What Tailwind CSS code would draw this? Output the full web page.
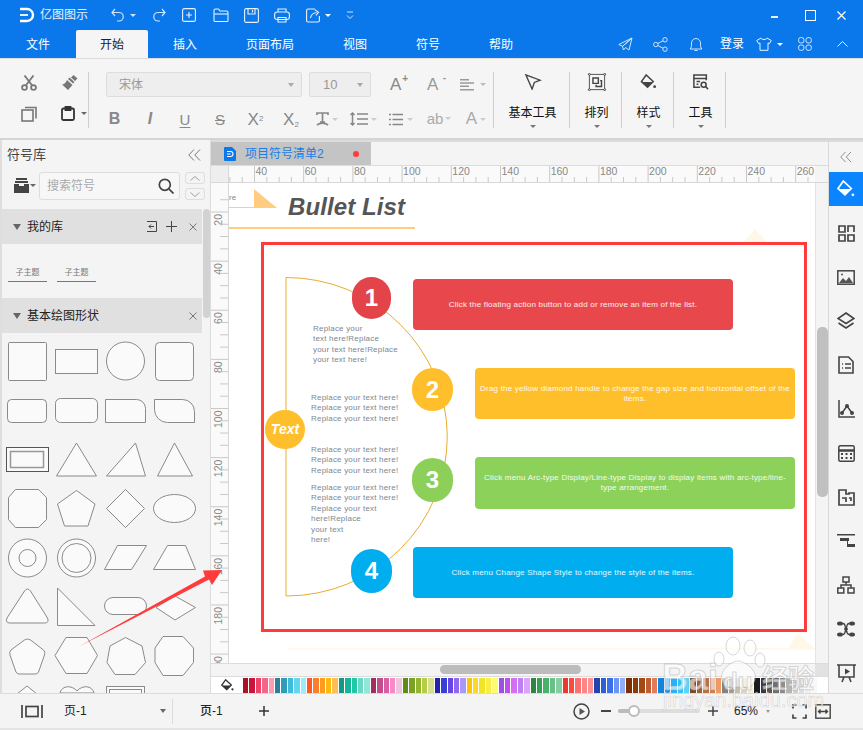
<!DOCTYPE html>
<html lang="zh">
  <head>
    <meta charset="UTF-8" />
    <meta name="viewport" content="width=device-width, initial-scale=1.0" />
    <script src="https://cdn.jsdelivr.net/npm/@tailwindcss/browser@4"></script>
    <title>亿图图示</title>
  </head>
  <body class="bg-[#f4f4f4] overflow-hidden">
    <div class="relative w-[863px] h-[730px] overflow-hidden flex flex-col text-xs text-[#333] font-['Liberation_Sans','Noto_Sans_CJK_SC',sans-serif]">

      <!-- title bar -->
      <div class="h-[30px] bg-[#0a78eb] flex items-center text-white shrink-0">
        <svg class="ml-[19px] w-[16px] h-[16px]" viewBox="0 0 16 16" fill="none" stroke="#fff" stroke-width="2.4"><path d="M1 2h7a6 6 0 0 1 0 12H1"/><path d="M1 8h8" stroke-width="1.8"/></svg>
        <span class="ml-[5px] text-[12px] w-[48px] whitespace-nowrap text-white/90">亿图图示</span>
        <svg class="ml-[23px] w-[13px] h-[14px]" viewBox="0 0 13 14" fill="none" stroke="#cfe4fb" stroke-width="1.2"><path d="M4 1 1 4.500 4 8"/><path d="M1 4.500h7a4 4 0 0 1 0 8.500H6"/></svg>
        <span class="ml-[6px] w-0 h-0 border-x-[3px] border-x-transparent border-t-[3px] border-t-[#cfe4fb]"></span>
        <svg class="ml-[17px] w-[13px] h-[14px]" viewBox="0 0 13 14" fill="none" stroke="#cfe4fb" stroke-width="1.2"><path d="M9 1l3 3.500L9 8"/><path d="M12 4.500H5a4 4 0 0 0 0 8.500h2"/></svg>
        <svg class="ml-[16px] w-[14px] h-[14px]" viewBox="0 0 14 14" fill="none" stroke="#e8f2fd" stroke-width="1.1"><rect x=".6" y=".6" width="12.800" height="12.800" rx="1.500"/><path d="M7 4v6M4 7h6"/></svg>
        <svg class="ml-[17px] w-[16px] h-[14px]" viewBox="0 0 16 14" fill="none" stroke="#e8f2fd" stroke-width="1.1"><path d="M1 12.500V2.500a1.500 1.500 0 0 1 1.500-1.500h3L7 3h6.500A1.500 1.500 0 0 1 15 4.500v8a1 1 0 0 1-1 1H2a1 1 0 0 1-1-1z"/><path d="M1 6h14"/></svg>
        <svg class="ml-[15px] w-[15px] h-[15px]" viewBox="0 0 15 15" fill="none" stroke="#e8f2fd" stroke-width="1.1"><rect x=".6" y=".6" width="13.800" height="13.800" rx="1.500"/><path d="M4 1v5h7V1M8.500 2v2.500"/></svg>
        <svg class="ml-[15px] w-[16px] h-[15px]" viewBox="0 0 16 15" fill="none" stroke="#e8f2fd" stroke-width="1.1"><rect x=".6" y="4" width="14.800" height="7.500" rx="2.500"/><path d="M4 4V1h8v3M4 9.500h8V14H4z"/></svg>
        <svg class="ml-[16px] w-[15px] h-[15px]" viewBox="0 0 15 15" fill="none" stroke="#e8f2fd" stroke-width="1.1"><path d="M9 1H2a1.400 1.400 0 0 0-1.400 1.400v10.200A1.400 1.400 0 0 0 2 14h10a1.400 1.400 0 0 0 1.400-1.400V8"/><path d="M4.500 10c.5-3 2.500-5 6-5.500M9 1.800l3.500 2.500L10 7.300"/></svg>
        <span class="ml-[4px] w-0 h-0 border-x-[3px] border-x-transparent border-t-[3px] border-t-white"></span>
        <svg class="ml-[15px] w-[8px] h-[9px]" viewBox="0 0 8 9" fill="none" stroke="#cfe4fb" stroke-width="1"><path d="M1 1h6M1 4.500l3 3 3-3"/></svg>
        <span class="ml-auto w-[7px] h-[2px] bg-white/90 mt-[4px]"></span>
        <span class="ml-[27px] w-[9px] h-[9px] border-[1.500px] border-white box-content"></span>
        <svg class="ml-[21px] mr-[17px] w-[9px] h-[9px]" viewBox="0 0 9 9" stroke="#fff" stroke-width="1.200"><path d="M.5.500l8 8M8.500.500l-8 8"/></svg>
      </div>

      <!-- tabs -->
      <div class="h-[28px] bg-[#0a78eb] flex items-stretch text-white text-[12px] shrink-0 relative">
        <div class="w-[76px] pl-[26px] pt-[7px]">文件</div>
        <div class="w-[72px] bg-[#f5f5f5] rounded-t-[2px] text-center pt-[7px] text-[#222]">开始</div>
        <div class="ml-[25px] w-[73px] pt-[7px]">插入</div>
        <div class="w-[97px] pt-[7px]">页面布局</div>
        <div class="w-[73px] pt-[7px]">视图</div>
        <div class="w-[73px] pt-[7px]">符号</div>
        <div class="w-[60px] pt-[7px]">帮助</div>
        <div class="ml-auto flex items-center pr-[15px]">
          <svg class="w-[15px] h-[15px]" viewBox="0 0 15 15" fill="none" stroke="#cfe4fb" stroke-width="1"><path d="M14 1 .8 7.500l3.700 1.800zM14 1 4.500 9.300 5.500 13M14 1l-3 12-3.500-2.500-2 2.500"/></svg>
          <svg class="ml-[20px] w-[15px] h-[15px]" viewBox="0 0 15 15" fill="none" stroke="#cfe4fb" stroke-width="1"><circle cx="2.800" cy="7.500" r="2.200"/><circle cx="12" cy="2.800" r="2.200"/><circle cx="12" cy="12.200" r="2.200"/><path d="M4.800 6.500 10 3.800M4.800 8.500 10 11.200"/></svg>
          <svg class="ml-[21px] w-[14px] h-[16px]" viewBox="0 0 14 16" fill="none" stroke="#cfe4fb" stroke-width="1"><path d="M1 13h12c-1.500-1-1.500-3-1.500-6a4.500 4.500 0 0 0-9 0c0 3 0 5-1.500 6zM5.500 14.500h3"/></svg>
          <span class="ml-[17px] text-white">登录</span>
          <svg class="ml-[12px] w-[16px] h-[14px]" viewBox="0 0 16 14" fill="none" stroke="#e8f2fd" stroke-width="1"><path d="M5 1 .7 3.500 2.500 6.500 4 6v7.300h8V6l1.500.5 1.800-3L11 1c-.5 2-5.500 2-6 0z"/></svg>
          <span class="ml-[5px] w-0 h-0 border-x-[3px] border-x-transparent border-t-[3px] border-t-white"></span>
          <svg class="ml-[15px] w-[14px] h-[14px]" viewBox="0 0 14 14" fill="none" stroke="#cfe4fb" stroke-width="1"><rect x=".6" y=".6" width="5.300" height="5.300" rx="2"/><rect x="8" y=".6" width="5.300" height="5.300" rx="2"/><rect x=".6" y="8" width="5.300" height="5.300" rx="2"/><rect x="8" y="8" width="5.300" height="5.300" rx="2"/></svg>
          <svg class="ml-[25px] w-[11px] h-[6px]" viewBox="0 0 11 6" fill="none" stroke="#e8f2fd" stroke-width="1"><path d="M.5 5.500l5-5 5 5"/></svg>
        </div>
      </div>

      <!-- ribbon -->
      <div class="h-[82px] bg-[#f5f5f5] border-t border-[#dcdcdc] border-b-2 border-b-[#d4d4d4] flex items-start shrink-0 pt-[13px] pl-[2px]">
        <div class="w-[86px] h-[56px] border-r border-[#cfcfcf] grid grid-cols-[59px_1fr] grid-rows-[34px_1fr] items-start box-content">
          <svg class="ml-[19px] mt-[3px] w-[16px] h-[16px]" viewBox="0 0 16 16" fill="none" stroke="#777" stroke-width="1.800"><circle cx="3.500" cy="12.500" r="2.400"/><circle cx="12.500" cy="12.500" r="2.400"/><path d="M4.800 10.500 12.500.5M11.200 10.500 3.500.5"/></svg>
          <svg class="mt-[2px] w-[17px] h-[17px]" viewBox="0 0 17 17" fill="#777"><path d="M12.500 1l4 3.500-2.500 2.500-4-3.500zM8.500 3.500l5 4.500-1.500 1.500-5-4.500zM6 6l5.500 5-4.500 5L1 10.500c2 0 4-2 5-4.500z"/></svg>
          <svg class="ml-[19px] w-[16px] h-[16px]" viewBox="0 0 16 16" fill="none" stroke="#777" stroke-width="1.600"><rect x="1" y="4" width="11" height="11"/><path d="M4 1.500h11v11"/></svg>
          <div class="flex items-start">
            <svg class="w-[14px] h-[15px]" viewBox="0 0 14 15" fill="none" stroke="#333" stroke-width="1.800"><rect x="1" y="2.500" width="12" height="11.500" rx="1.500"/><path d="M4.500 1h5v3h-5z"/></svg>
            <span class="ml-[6px] mt-[6px] w-0 h-0 border-x-[3px] border-x-transparent border-t-[3px] border-t-[#666]"></span>
          </div>
        </div>
        <div class="w-[404px] h-[56px] border-r border-[#cfcfcf] box-content">
          <div class="flex items-center h-[25px] pl-[17px]">
            <div class="w-[196px] h-[25px] bg-[#eeeeee] border border-[#dddddd] rounded-[2px] flex items-center pl-[12px] pr-[7px] text-[#999] justify-between"><span>宋体</span><span class="w-0 h-0 border-x-[3px] border-x-transparent border-t-[4px] border-t-[#aaa]"></span></div>
            <div class="ml-[7px] w-[62px] h-[25px] bg-[#eeeeee] border border-[#dddddd] rounded-[2px] flex items-center pl-[13px] pr-[7px] text-[#999] justify-between"><span class="text-[13px]">10</span><span class="w-0 h-0 border-x-[3px] border-x-transparent border-t-[4px] border-t-[#aaa]"></span></div>
            <span class="ml-[19px] w-[17px] text-[#888] text-[17px] leading-none relative">A<span class="absolute -top-[2px] -right-[1px] text-[10px] font-bold">+</span></span>
            <span class="ml-[20px] w-[17px] text-[#999] text-[17px] leading-none relative">A<span class="absolute -top-[3px] -right-[2px] text-[10px] font-bold">-</span></span>
            <svg class="ml-[16px] w-[14px] h-[12px]" viewBox="0 0 14 12" fill="#999"><path d="M0 0h9v1.500H0zM0 3.300h14v1.500H0zM0 6.600h9v1.500H0zM0 10h14v1.500H0z"/></svg>
            <span class="ml-[6px] w-0 h-0 border-x-[3px] border-x-transparent border-t-[3px] border-t-[#bbb]"></span>
          </div>
          <div class="flex items-center h-[20px] mt-[12px] pl-[8px] text-[#888]">
            <span class="w-[35px] text-center font-bold text-[16px] leading-none">B</span>
            <span class="w-[36px] text-center font-bold italic text-[16px] leading-none">I</span>
            <span class="w-[34px] text-center text-[15px] leading-none underline underline-offset-2">U</span>
            <span class="w-[36px] text-center text-[15px] leading-none line-through">S</span>
            <span class="w-[35px] text-center text-[17px] leading-none">X<sup class="text-[8px]">2</sup></span>
            <span class="w-[36px] text-center text-[17px] leading-none">X<sub class="text-[8px]">2</sub></span>
            <div class="w-[36px] flex items-center justify-center">
              <svg class="w-[13px] h-[15px]" viewBox="0 0 13 15" fill="none" stroke="#888" stroke-width="1.700"><path d="M1 3V1h11v2M6.500 1v9M4 10h5M1 13c3-2.500 8-2.500 11 0"/></svg>
              <span class="ml-[3px] w-0 h-0 border-x-[3px] border-x-transparent border-t-[3px] border-t-[#ccc]"></span>
            </div>
            <div class="w-[37px] flex items-center justify-center">
              <svg class="w-[19px] h-[14px]" viewBox="0 0 19 14" fill="none" stroke="#888" stroke-width="1.500"><path d="M2.500 1v12M.5 3l2-2 2 2M.5 11l2 2 2-2M7 2h11M7 7h11M7 12h11"/></svg>
              <span class="ml-[2px] w-0 h-0 border-x-[3px] border-x-transparent border-t-[3px] border-t-[#ccc]"></span>
            </div>
            <div class="w-[37px] flex items-center justify-center">
              <svg class="w-[14px] h-[13px]" viewBox="0 0 14 13" fill="none" stroke="#888" stroke-width="1.500"><path d="M3.500 1.500H14M3.500 6.500H14M3.500 11.500H14M0 1.500h2M0 6.500h2M0 11.500h2"/></svg>
              <span class="ml-[4px] w-0 h-0 border-x-[3px] border-x-transparent border-t-[3px] border-t-[#ccc]"></span>
            </div>
            <div class="w-[40px] flex items-center justify-center text-[#aaa] text-[15px]"><span>ab</span><span class="ml-[2px] w-0 h-0 border-x-[3px] border-x-transparent border-t-[3px] border-t-[#ccc]"></span></div>
            <div class="w-[34px] flex items-center justify-center text-[#aaa] text-[17px]"><span>A</span><span class="ml-[3px] w-0 h-0 border-x-[3px] border-x-transparent border-t-[3px] border-t-[#ccc]"></span></div>
          </div>
        </div>
        <div class="w-[73px] h-[56px] pl-[2px] border-r border-[#cfcfcf] flex flex-col items-center box-content">
          <svg class="mt-[2px] w-[18px] h-[18px]" viewBox="0 0 18 18" fill="none" stroke="#444" stroke-width="1.500"><path d="M1 1l16 6-6.500 2.500L8 17z"/></svg>
          <span class="mt-[15px] text-[#111]">基本工具</span>
          <span class="mt-[4px] w-0 h-0 border-x-[3px] border-x-transparent border-t-[3px] border-t-[#777]"></span>
        </div>
        <div class="w-[49px] h-[56px] pl-[2px] border-r border-[#cfcfcf] flex flex-col items-center box-content">
          <svg class="mt-[1px] w-[20px] h-[20px]" viewBox="0 0 20 20" fill="none" stroke="#444"><rect x="1.500" y="1.500" width="17" height="17"/><path d="M5.500 5.500h6v6h-6z" stroke-width="1.600"/><path d="M13.500 8.500h1.500v6.500H9V13" stroke-width="1.600"/><g fill="#f5f5f5"><circle cx="1.500" cy="1.500" r="1.100"/><circle cx="18.500" cy="1.500" r="1.100"/><circle cx="1.500" cy="18.500" r="1.100"/><circle cx="18.500" cy="18.500" r="1.100"/></g></svg>
          <span class="mt-[14px] text-[#111]">排列</span>
          <span class="mt-[4px] w-0 h-0 border-x-[3px] border-x-transparent border-t-[3px] border-t-[#777]"></span>
        </div>
        <div class="w-[49px] h-[56px] pl-[2px] border-r border-[#cfcfcf] flex flex-col items-center box-content">
          <svg class="mt-[2px] w-[17px] h-[17px]" viewBox="0 0 17 17"><path d="M6 1 1 8l6.500 6 6-6z" fill="none" stroke="#444" stroke-width="1.600"/><path d="M1.500 8.500h12l-6 5.500z" fill="#444"/><circle cx="15" cy="13.500" r="1.500" fill="#444"/></svg>
          <span class="mt-[15px] text-[#111]">样式</span>
          <span class="mt-[4px] w-0 h-0 border-x-[3px] border-x-transparent border-t-[3px] border-t-[#777]"></span>
        </div>
        <div class="w-[49px] h-[56px] pl-[2px] border-r border-[#cfcfcf] flex flex-col items-center box-content">
          <svg class="mt-[2px] w-[18px] h-[18px]" viewBox="0 0 18 18" fill="none" stroke="#444" stroke-width="1.700"><path d="M15 7V1H1v14h7"/><path d="M1 5h14M4 8.500h4M4 11.500h2"/><circle cx="12" cy="12" r="2.800"/><path d="M14 14l3 3"/></svg>
          <span class="mt-[15px] text-[#111]">工具</span>
          <span class="mt-[4px] w-0 h-0 border-x-[3px] border-x-transparent border-t-[3px] border-t-[#777]"></span>
        </div>
      </div>

      <!-- main -->
      <div class="flex-1 flex min-h-0">
        <!-- symbol library -->
        <div class="w-[211px] shrink-0 border-l-2 border-[#dedede] border-r border-r-[#dcdcdc] flex flex-col bg-[#f4f4f4] overflow-hidden">
          <div class="h-[29px] shrink-0 flex items-center pl-[5px] pr-[9px] justify-between">
            <span class="text-[13px] text-[#444]">符号库</span>
            <svg class="w-[13px] h-[12px]" viewBox="0 0 13 12" fill="none" stroke="#777"><path d="M6 .5.800 6 6 11.500M12 .5 6.800 6 12 11.500"/></svg>
          </div>
          <div class="h-[40px] shrink-0 flex pl-[12px] pt-[3px]">
            <svg class="mt-[6px] w-[15px] h-[15px]" viewBox="0 0 15 15" fill="#444"><path d="M2 0h11v2H2zM1 3h13v2H1zM0 6h5v2h5V6h5v9H0z"/></svg>
            <span class="ml-[1px] mt-[12px] w-0 h-0 border-x-[3px] border-x-transparent border-t-[3px] border-t-[#666]"></span>
            <div class="ml-[3px] w-[141px] h-[28px] bg-[#f7f7f7] border border-[#dddddd] rounded-[3px] flex items-center pl-[7px] pr-[5px] justify-between text-[#aaa]">
              <span>搜索符号</span>
              <svg class="w-[16px] h-[16px]" viewBox="0 0 16 16" fill="none" stroke="#444" stroke-width="1.700"><circle cx="6.800" cy="6.800" r="5.500"/><path d="M10.800 10.800 15.500 15.500"/></svg>
            </div>
            <div class="ml-[5px] flex flex-col gap-[4px]">
              <div class="w-[20px] h-[12px] border border-[#dddddd] rounded-[3px] flex items-center justify-center"><svg class="w-[10px] h-[5px]" viewBox="0 0 10 5" fill="none" stroke="#888" stroke-width=".8"><path d="M.5 4.500 5 .5l4.500 4"/></svg></div>
              <div class="w-[20px] h-[12px] border border-[#dddddd] rounded-[3px] flex items-center justify-center"><svg class="w-[10px] h-[5px]" viewBox="0 0 10 5" fill="none" stroke="#888" stroke-width=".8"><path d="M.5.500 5 4.500l4.500-4"/></svg></div>
            </div>
          </div>
          <div class="flex-1 min-h-0 relative">
            <div class="absolute right-0 top-0 w-[7px] h-[109px] bg-[#d2d2d2] rounded-[4px]"></div>
            <div class="w-[200px]">
              <div class="h-[35px] bg-[#e0e0e0] flex items-center pl-[11px] pr-[5px]">
                <span class="w-0 h-0 border-x-[4px] border-x-transparent border-t-[6px] border-t-[#666]"></span>
                <span class="ml-[6px] text-[#222]">我的库</span>
                <svg class="ml-auto w-[11px] h-[11px]" viewBox="0 0 11 11" fill="none" stroke="#444"><path d="M1 .5h9.500v10H1M8 5.500H3M5 3.500l-2 2 2 2"/></svg>
                <svg class="ml-[9px] w-[11px] h-[11px]" viewBox="0 0 11 11" stroke="#444"><path d="M5.500 0v11M0 5.500h11"/></svg>
                <svg class="ml-[12px] w-[8px] h-[8px]" viewBox="0 0 8 8" stroke="#777"><path d="M.5.500l7 7M7.500.500l-7 7"/></svg>
              </div>
              <div class="h-[54px] flex pt-[24px] pl-[6px] gap-[10px]">
                <div class="w-[39px] h-[14px] border-b border-[#777] text-center text-[8px] leading-[10px] text-[#777]">子主题</div>
                <div class="w-[39px] h-[14px] border-b border-[#777] text-center text-[8px] leading-[10px] text-[#777]">子主题</div>
              </div>
              <div class="h-[35px] bg-[#e0e0e0] flex items-center pl-[11px] pr-[5px]">
                <span class="w-0 h-0 border-x-[4px] border-x-transparent border-t-[6px] border-t-[#666]"></span>
                <span class="ml-[6px] text-[#222]">基本绘图形状</span>
                <svg class="ml-auto w-[8px] h-[8px]" viewBox="0 0 8 8" stroke="#777"><path d="M.5.500l7 7M7.500.500l-7 7"/></svg>
              </div>
            </div>
            <!-- shape grid, viewBox in window coordinates -->
            <svg class="block w-[200px] h-[360px]" viewBox="2 333 200 360" fill="#fafafa" stroke="#8a8a8a" stroke-width="1">
              <rect x="8.500" y="342.500" width="38" height="38" rx="1"/>
              <rect x="55.500" y="349.500" width="42" height="24"/>
              <circle cx="125.500" cy="361" r="19"/>
              <rect x="155.500" y="342.500" width="38" height="38" rx="4"/>
              <rect x="7.500" y="399.500" width="39" height="23" rx="4"/>
              <rect x="55.500" y="398.500" width="42" height="24" rx="5"/>
              <path d="M105.500 399.500h31a9 9 0 0 1 9 9v14h-40z"/>
              <path d="M154.500 399.500h28a12 12 0 0 1 12 12v11h-27a13 13 0 0 1-13-13z"/>
              <rect x="6.500" y="447.500" width="42" height="24" stroke="#555"/>
              <rect x="10.500" y="451.500" width="33" height="16" stroke="#999" stroke-width="1.500"/>
              <path d="M76.500 443 56.500 476h40z"/>
              <path d="M135.500 443 106.500 476h39z"/>
              <path d="M174.500 443 157.500 476h35z"/>
              <path d="M15.500 489.500h23l8 8v22l-8 8h-23l-7-8v-22z"/>
              <path d="M76.500 490.500 95 504l-7 22H64.500l-7-22z"/>
              <path d="M125.500 489.500 144.500 508.500 125.500 527.500 106.500 508.500z"/>
              <ellipse cx="174.500" cy="508.500" rx="21" ry="14"/>
              <circle cx="27.500" cy="558" r="19"/><circle cx="27.500" cy="558" r="8.500"/>
              <circle cx="76.500" cy="558" r="19"/><circle cx="76.500" cy="558" r="14.500"/>
              <path d="M117.500 545.500h29l-15 24h-27z"/>
              <path d="M167.500 545.500h18l10 24h-42z"/>
              <path d="M24.500 591q3-4 6 0l17 27q2 5-3 5H10q-5 0-3-5z"/>
              <path d="M57.500 588 95 625.500H57.500z"/>
              <path d="M175 596 195.500 607.500 175 620 156 607.500z"/>
              <rect x="104.500" y="597.500" width="42" height="17" rx="8.500"/>
              <path d="M24.500 640q3-2 6 0l13 10q2 2 1 5l-6 17q-1 2-3 2H19q-2 0-3-2L10 655q-1-3 1-5z"/>
              <path d="M66 637.500h21l10.500 18L87 673.500H66l-11-18z"/>
              <path d="M125.500 637.500 142 646l3.500 16.500-10.500 12h-20l-8-12 3-16.500z"/>
              <path d="M163 636.500h20l10.500 11.500v14.500L183 675.500h-20l-8-13V648z"/>
              <path d="M27 686l10 8H17z"/>
              <path d="M60 693c2-8 12-8 17-2 5-6 15-6 17 2z"/>
              <rect x="106.500" y="686.500" width="38" height="12"/><rect x="109.500" y="689.500" width="32" height="8"/>
            </svg>
          </div>
        </div>

        <!-- document area -->
        <div class="w-[617px] shrink-0 flex flex-col min-w-0">
          <div class="h-[26px] shrink-0 flex border-t-2 border-[#dcdcdc] bg-[#f4f4f4] border-b border-b-[#dcdcdc] box-border">
            <div class="w-[160px] bg-[#c4c4c4] flex items-center pl-[13px] text-[12px] text-[#1a7ee8]">
              <svg class="w-[12px] h-[14px]" viewBox="0 0 12 14"><path d="M1 0h7l4 4v9a1 1 0 0 1-1 1H1a1 1 0 0 1-1-1V1a1 1 0 0 1 1-1z" fill="#0a78eb"/><path d="M3 4.500h3.500a2.500 2.500 0 0 1 0 5H3M3 7h3.500" fill="none" stroke="#fff" stroke-width="1.100"/></svg>
              <span class="ml-[9px] whitespace-nowrap">项目符号清单2</span>
              <span class="ml-[29px] w-[6px] h-[6px] rounded-full bg-[#ff3b3b]"></span>
            </div>
          </div>
          <div class="h-[17px] shrink-0 flex border-b border-[#d8d8d8]">
            <div class="w-[18px] bg-[#eeeeee] border-r border-[#d8d8d8]"></div>
            <svg id="rulerTop" class="flex-1 h-[16px] bg-[#fafafa]"></svg>
            <div class="w-[13px] bg-[#f4f4f4]"></div>
          </div>
          <div class="flex-1 flex min-h-0">
            <svg id="rulerLeft" class="w-[18px] h-full bg-[#fafafa] border-r border-[#d8d8d8] shrink-0"></svg>
            <!-- drawing page -->
            <div class="relative flex-1 bg-white overflow-hidden">
              <span class="absolute left-0 top-[11px] text-[8px] leading-[8px] text-[#888]">re</span>
              <svg class="absolute left-0 top-0 w-[586px] h-[481px]" viewBox="229 183 586 481">
                <path d="M229 207h25v-18l23 19H229z" fill="#ffcc80"/>
                <path d="M229 227h186v2H229z" fill="#ffcc80"/>
                <path d="M743 243 755 229 768 243z" fill="#fff8e8"/>
                <path d="M788 649 798 633 815 649z" fill="#fff8e8"/>
                <path d="M288 648h527v1.500H288z" fill="#fff8e8"/>
                <path d="M286 277.500A161 159 0 0 1 286 596z" fill="none" stroke="#e8ac30"/>
              </svg>
              <span class="absolute left-[59px] top-[8px] text-[24px] leading-[32px] font-bold italic tracking-[.1px] text-[#555]">Bullet List</span>
              <div class="absolute left-[32px] top-[59px] w-[546px] h-[390px] border-[3px] border-[#ff3b3b]"></div>

              <div class="absolute left-[184px] top-[96px] w-[320px] h-[51px] rounded-[4px] bg-[#e8484c] flex items-center justify-center text-center text-[8px] leading-[10px] tracking-[.2px] text-white/90">Click the floating action button to add or remove an item of the list.</div>
              <div class="absolute left-[246px] top-[185px] w-[320px] h-[51px] rounded-[4px] bg-[#ffbf2b] flex items-center justify-center text-center text-[8px] leading-[10px] tracking-[.2px] text-white/90">Drag the yellow diamond handle to change the gap size and horizontal offset of the items.</div>
              <div class="absolute left-[246px] top-[274px] w-[320px] h-[52px] rounded-[4px] bg-[#8cd15a] flex items-center justify-center px-[4px] text-center text-[8px] leading-[10px] tracking-[.2px] text-white/90">Click menu Arc-type Display/Line-type Display to display items with arc-type/line-type arrangement.</div>
              <div class="absolute left-[184px] top-[364px] w-[320px] h-[51px] rounded-[4px] bg-[#00aeef] flex items-center justify-center text-center text-[8px] leading-[10px] tracking-[.2px] text-white/90">Click menu Change Shape Style to change the style of the items.</div>

              <div class="absolute left-[123px] top-[94px] w-[39px] h-[42px] rounded-full bg-[#e2444a] flex items-center justify-center text-white font-bold text-[24px]">1</div>
              <div class="absolute left-[183px] top-[185px] w-[41px] h-[43px] rounded-full bg-[#ffbe2b] flex items-center justify-center text-white font-bold text-[24px]">2</div>
              <div class="absolute left-[183px] top-[275px] w-[41px] h-[44px] rounded-full bg-[#8cd05a] flex items-center justify-center text-white font-bold text-[24px]">3</div>
              <div class="absolute left-[122px] top-[366px] w-[41px] h-[44px] rounded-full bg-[#00aeef] flex items-center justify-center text-white font-bold text-[24px]">4</div>
              <div class="absolute left-[36px] top-[227px] w-[40px] h-[39px] rounded-full bg-[#ffbe2b] flex items-center justify-center text-white font-bold italic text-[14px]">Text</div>

              <div class="absolute left-[84px] top-[141px] text-[8px] leading-[10.300px] tracking-[.2px] text-[#7b8794] whitespace-nowrap">Replace your<br />text here!Replace<br />your text here!Replace<br />your text here!</div>
              <div class="absolute left-[82px] top-[210px] text-[8px] leading-[10.400px] tracking-[.2px] text-[#7b8794] whitespace-nowrap">Replace your text here!<br />Replace your text here!<br />Replace your text here!</div>
              <div class="absolute left-[82px] top-[262px] text-[8px] leading-[10.400px] tracking-[.2px] text-[#7b8794] whitespace-nowrap">Replace your text here!<br />Replace your text here!<br />Replace your text here!</div>
              <div class="absolute left-[82px] top-[300px] text-[8px] leading-[10.400px] tracking-[.2px] text-[#7b8794] whitespace-nowrap">Replace your text here!<br />Replace your text here!<br />Replace your text<br />here!Replace<br />your text<br />here!</div>
            </div>
            <div class="w-[13px] shrink-0 bg-[#f4f4f4] border-l border-[#e4e4e4] relative">
              <div class="absolute left-[1px] top-[144px] w-[11px] h-[170px] rounded-[5px] bg-[#c0c0c0]"></div>
            </div>
          </div>
          <div class="h-[13px] shrink-0 flex bg-[#f4f4f4] border-t border-[#dcdcdc] relative">
            <div class="absolute left-[229px] top-[1px] w-[141px] h-[9px] rounded-[5px] bg-[#bcbcbc]"></div>
            <div class="ml-auto w-[13px] bg-[#e2e2e2]"></div>
          </div>
          <div class="h-[17px] shrink-0 bg-white border-t border-[#dcdcdc] flex items-center">
            <div class="w-[32px] h-full flex items-center justify-center pl-[1px]">
              <svg class="w-[13px] h-[13px]" viewBox="0 0 17 17"><path d="M6 1 1 8l6.500 6 6-6z" fill="none" stroke="#333" stroke-width="1.700"/><path d="M1.500 8.500h12l-6 5.500z" fill="#333"/><circle cx="15" cy="13.500" r="1.500" fill="#333"/></svg>
            </div>
            <div id="swatches" class="flex h-[15px]"></div>
          </div>
        </div>

        <!-- right panel -->
        <div class="flex-1 border-l border-[#d8d8d8] border-t-2 border-t-[#dcdcdc] flex flex-col items-center bg-[#f4f4f4] overflow-hidden">
          <svg class="mt-[9px] shrink-0 w-[12px] h-[12px]" viewBox="0 0 13 12" fill="none" stroke="#888"><path d="M6 .5.800 6 6 11.500M12 .5 6.800 6 12 11.500"/></svg>
          <div class="mt-[9px] mb-[5px] shrink-0 w-full h-[34px] bg-[#0a84ff] flex items-center justify-center">
            <svg class="w-[18px] h-[18px]" viewBox="0 0 17 17"><path d="M6 1 1 8l6.500 6 6-6z" fill="none" stroke="#fff" stroke-width="1.600"/><path d="M1.500 8.500h12l-6 5.500z" fill="#fff"/><circle cx="15" cy="14" r="1.300" fill="#fff"/></svg>
          </div>
          <div class="h-[44px] shrink-0 flex items-center"><svg class="w-[17px] h-[17px]" viewBox="0 0 17 17" fill="none" stroke="#444" stroke-width="1.700"><path d="M1 1h6v6H1zM1 10h6v6H1zM10 10h6v6h-6zM10 7V1h6v6"/></svg></div>
          <div class="h-[44px] shrink-0 flex items-center"><svg class="w-[18px] h-[15px]" viewBox="0 0 18 15"><rect x=".8" y=".8" width="16.400" height="13.400" fill="none" stroke="#444" stroke-width="1.500"/><path d="M2 13l4-5 3 3 3-4 4 6z" fill="#555"/><circle cx="5" cy="4.500" r="1" fill="#555"/></svg></div>
          <div class="h-[44px] shrink-0 flex items-center"><svg class="w-[18px] h-[18px]" viewBox="0 0 18 18" fill="none" stroke="#444" stroke-width="1.600"><path d="M9 1 17 6.500 9 11.500 1 6.500z"/><path d="M1.500 11 9 16l7.500-5"/></svg></div>
          <div class="h-[44px] shrink-0 flex items-center"><svg class="w-[16px] h-[18px]" viewBox="0 0 16 18" fill="none" stroke="#444" stroke-width="1.600"><path d="M1 1h9.500L15 5.500V17H1zM4 8h1M7 8h6M4 12h1M7 12h6"/></svg></div>
          <div class="h-[44px] shrink-0 flex items-center"><svg class="w-[17px] h-[18px]" viewBox="0 0 17 18" fill="none" stroke="#444" stroke-width="1.500"><path d="M1 0v17h16M4 13l5-7 5 7"/><g fill="#444" stroke="none"><circle cx="4" cy="13" r="2"/><circle cx="9" cy="6" r="2"/><circle cx="14" cy="13" r="2"/></g></svg></div>
          <div class="h-[44px] shrink-0 flex items-center"><svg class="w-[17px] h-[17px]" viewBox="0 0 17 17" fill="none" stroke="#444" stroke-width="1.500"><rect x=".8" y=".8" width="15.400" height="15.400" rx="1.500"/><path d="M1 5.500h15" stroke-width="2.500"/><path d="M3 9h2M7.500 9h2M12 9h2M3 13h2M7.500 13h2M12 13h2" stroke-width="2"/></svg></div>
          <div class="h-[44px] shrink-0 flex items-center"><svg class="w-[17px] h-[17px]" viewBox="0 0 17 17" fill="none" stroke="#444" stroke-width="1.700"><path d="M1 1h7v4h3V4h5v12H1zM4 9h4v4M11 9h2v3"/></svg></div>
          <div class="h-[44px] shrink-0 flex items-center"><svg class="w-[18px] h-[14px]" viewBox="0 0 18 14"><path d="M0 0h18v1.500H0zM3 4h9v3H3zM10 7h1v4h-1zM10 10h8v3h-8z" fill="#444"/></svg></div>
          <div class="h-[44px] shrink-0 flex items-center"><svg class="w-[18px] h-[18px]" viewBox="0 0 18 18" fill="none" stroke="#444" stroke-width="1.500"><rect x="6" y="1" width="6" height="5"/><rect x=".8" y="12" width="6" height="5"/><rect x="11" y="12" width="6" height="5"/><path d="M9 6v3M4 12V9h10v3"/></svg></div>
          <div class="h-[44px] shrink-0 flex items-center"><svg class="w-[18px] h-[16px]" viewBox="0 0 18 16" fill="#444"><ellipse cx="3" cy="2.500" rx="3" ry="2"/><ellipse cx="15" cy="2.500" rx="3" ry="2"/><ellipse cx="3" cy="13.500" rx="3" ry="2"/><ellipse cx="15" cy="13.500" rx="3" ry="2"/><path d="M6 2.500c3 0 2 5.500 3 5.500s0-5.500 3-5.500M6 13.500c3 0 2-5.500 3-5.500s0 5.500 3 5.500M7 8h4" fill="none" stroke="#444" stroke-width="1.300"/></svg></div>
          <div class="h-[44px] shrink-0 flex items-center"><svg class="w-[19px] h-[19px]" viewBox="0 0 19 19" fill="none" stroke="#444" stroke-width="1.600"><path d="M0 1h19M2 1v12h15V1M5 18l2-5M14 18l-2-5"/><path d="M8 4.500 13 7.500 8 10.500z" fill="#444" stroke="none"/></svg></div>
        </div>
      </div>

      <!-- status bar -->
      <div class="h-[37px] shrink-0 bg-[#f4f4f4] border-t border-[#dcdcdc] border-b-2 border-b-[#e4e4e4] flex items-center text-[#222]">
        <svg class="ml-[21px] w-[22px] h-[13px]" viewBox="0 0 22 13" fill="none" stroke="#444" stroke-width="1.700"><path d="M1 0v13M21 0v13"/><rect x="5" y="1.500" width="12" height="10"/></svg>
        <span class="ml-[21px] w-[23px] whitespace-nowrap">页-1</span>
        <span class="ml-[73px] w-0 h-0 border-x-[3px] border-x-transparent border-t-[4px] border-t-[#666]"></span>
        <span class="ml-[6px] w-px h-[25px] bg-[#dcdcdc]"></span>
        <span class="ml-[27px] w-[24px] whitespace-nowrap font-medium">页-1</span>
        <svg class="ml-[35px] w-[10px] h-[10px]" viewBox="0 0 10 10" stroke="#333" stroke-width="1.500"><path d="M5 0v10M0 5h10"/></svg>
        <svg class="ml-[304px] w-[17px] h-[17px]" viewBox="0 0 17 17"><circle cx="8.500" cy="8.500" r="7.500" fill="none" stroke="#444" stroke-width="1.500"/><path d="M6.500 5 12 8.500 6.500 12z" fill="#555"/></svg>
        <span class="ml-[11px] w-[10px] h-[2px] bg-[#444]"></span>
        <div class="ml-[7px] w-[82px] h-[4px] rounded bg-[#dddddd] relative">
          <div class="w-[15px] h-[4px] rounded bg-[#bbbbbb]"></div>
          <div class="absolute left-[10px] -top-[4px] w-[12px] h-[12px] rounded-full bg-white border-2 border-[#bbbbbb]"></div>
        </div>
        <svg class="ml-[8px] w-[10px] h-[10px]" viewBox="0 0 10 10" stroke="#444" stroke-width="1.500"><path d="M5 0v10M0 5h10"/></svg>
        <span class="ml-[16px] w-[25px] whitespace-nowrap">65%</span>
        <span class="ml-[7px] w-0 h-0 border-x-[2px] border-x-transparent border-t-[3px] border-t-[#999]"></span>
        <svg class="ml-[22px] w-[15px] h-[15px]" viewBox="0 0 15 15" fill="none" stroke="#444" stroke-width="1.700"><path d="M1 4.500V1h3.500M10.500 1H14v3.500M14 10.500V14h-3.500M4.500 14H1v-3.500"/></svg>
        <svg class="ml-[8px] w-[16px] h-[15px]" viewBox="0 0 16 15" fill="none" stroke="#444" stroke-width="1.400"><rect x=".8" y=".8" width="14.400" height="13.400"/><path d="M3.500 7.500h9M5.500 5.500l-2 2 2 2M10.500 5.500l2 2-2 2"/></svg>
      </div>

      <!-- annotation arrow over the screenshot -->
      <svg class="absolute left-0 top-0 w-[863px] h-[730px] pointer-events-none" viewBox="0 0 863 730">
        <path d="M79 646.500 205 576.500 203 570.500 222 570 212 585 209 579.500z" fill="#ff3b3b"/>
      </svg>

      <!-- watermark -->
      <svg class="absolute left-0 top-0 w-[863px] h-[730px] pointer-events-none" viewBox="0 0 863 730" font-family="Liberation Sans, Noto Sans CJK SC, sans-serif">
        <g fill="#fff" fill-opacity=".6" stroke="#9a9a9a" stroke-opacity=".4" stroke-width="1">
          <text x="662" y="690" font-size="36" font-weight="700">Bai</text>
          <ellipse cx="733" cy="646" rx="7" ry="9"/>
          <ellipse cx="750" cy="648" rx="6" ry="8"/>
          <ellipse cx="719" cy="659" rx="5" ry="7"/>
          <ellipse cx="760" cy="660" rx="5" ry="7"/>
          <path d="M722 680c-3-10 10-19 16-19s20 9 17 19-10 7-17 7-13 3-16-7z"/>
          <text x="723" y="690" font-size="24" font-weight="700">du</text>
          <text x="762" y="688" font-size="26" font-weight="700">经验</text>
          <text x="663" y="707" font-size="20" stroke-width=".6">jingyan.baidu.com</text>
        </g>
      </svg>
    </div>

    <script>
      const swatchColors = [
        '#ab1324','#c9153a','#ec4568','#f76487','#f99fb0','#2b8097','#2f9dba','#40bbd9','#5fd7ee','#9eeaf5',
        '#f95a26','#fb7e2c','#fc9b1e','#fdb813','#fcbe55','#149880','#17b498','#1fc9a8','#6bd8c6','#8ee7d8',
        '#9f2e63','#c24d8d','#da5ea5','#f58ac6','#efc3da','#628a16','#78a325','#94b52f','#b5cd45','#d5e08e',
        '#2324ab','#363fd6','#6645e6','#9068ef','#ac97f5','#fcc40d','#fbd924','#f2e526','#f9ee43','#fdfa78',
        '#9c4fe0','#bb50ea','#d26ff2','#bf80f3','#dba4f8','#2e8645','#38a055','#4bb06a','#68bf87','#85cf9f',
        '#ea3a2e','#fb4a40','#fd7070','#fd8585','#fb9191','#2244ad','#2c5ed6','#3a70ec','#6d95f7','#90b0f3',
        '#7c2f02','#8f3a04','#a44814','#c25c34','#e07c58','#1184de','#1a9bec','#28b0f4','#30c4fa','#57d6fb',
        '#7f4a2a','#a0603a','#b87048','#d08050','#f09a65','#8a8076','#a69c8e','#c7bfae','#dcd6c4','#f2eddd',
        '#1a1a1a','#3a3a3a','#575757','#6f6f6f','#8c8c8c','#b5b5b5','#cfcfcf','#dfdfdf','#efefef','#f7f7f7','#ffffff'
      ];
      const swatches = document.getElementById('swatches');
      swatchColors.forEach((color) => {
        const s = document.createElement('span');
        s.className = 'block w-[5.400px] mr-px h-full';
        s.style.background = color;
        swatches.appendChild(s);
      });

      // rulers: 20 units every 49px, 4 ticks per 20 units
      const NS = 'http://www.w3.org/2000/svg';
      function add(svg, tag, attrs, text) {
        const el = document.createElementNS(NS, tag);
        Object.entries(attrs).forEach(([k, v]) => el.setAttribute(k, v));
        if (text) el.textContent = text;
        svg.appendChild(el);
      }
      const top_ = document.getElementById('rulerTop');
      for (let i = -2; i < 50; i++) {
        const x = 254.5 - 229 + i * 12.3;
        const major = i % 4 === 0;
        add(top_, 'line', { x1: x, x2: x, y1: major ? 0 : 11, y2: 16, stroke: '#c8c8c8' });
        if (major && i >= 0) add(top_, 'text', { x: x + 1, y: 9, 'font-size': 10.5, fill: '#888', 'font-family': 'Liberation Sans' }, String(40 + i * 5));
      }
      const left_ = document.getElementById('rulerLeft');
      for (let i = -1; i < 42; i++) {
        const y = 212 - 183 + i * 12.28;
        const major = i % 4 === 0;
        add(left_, 'line', { x1: major ? 0 : 9, x2: 17, y1: y, y2: y, stroke: '#c8c8c8' });
        if (major) {
          const tx = 11, ty = y + 2;
          add(left_, 'text', { x: tx, y: ty, 'font-size': 10.5, 'text-anchor': 'end', fill: '#888', 'font-family': 'Liberation Sans', transform: `rotate(-90 ${tx} ${ty})` }, String(20 + i * 5));
        }
      }
    </script>
  </body>
</html>
